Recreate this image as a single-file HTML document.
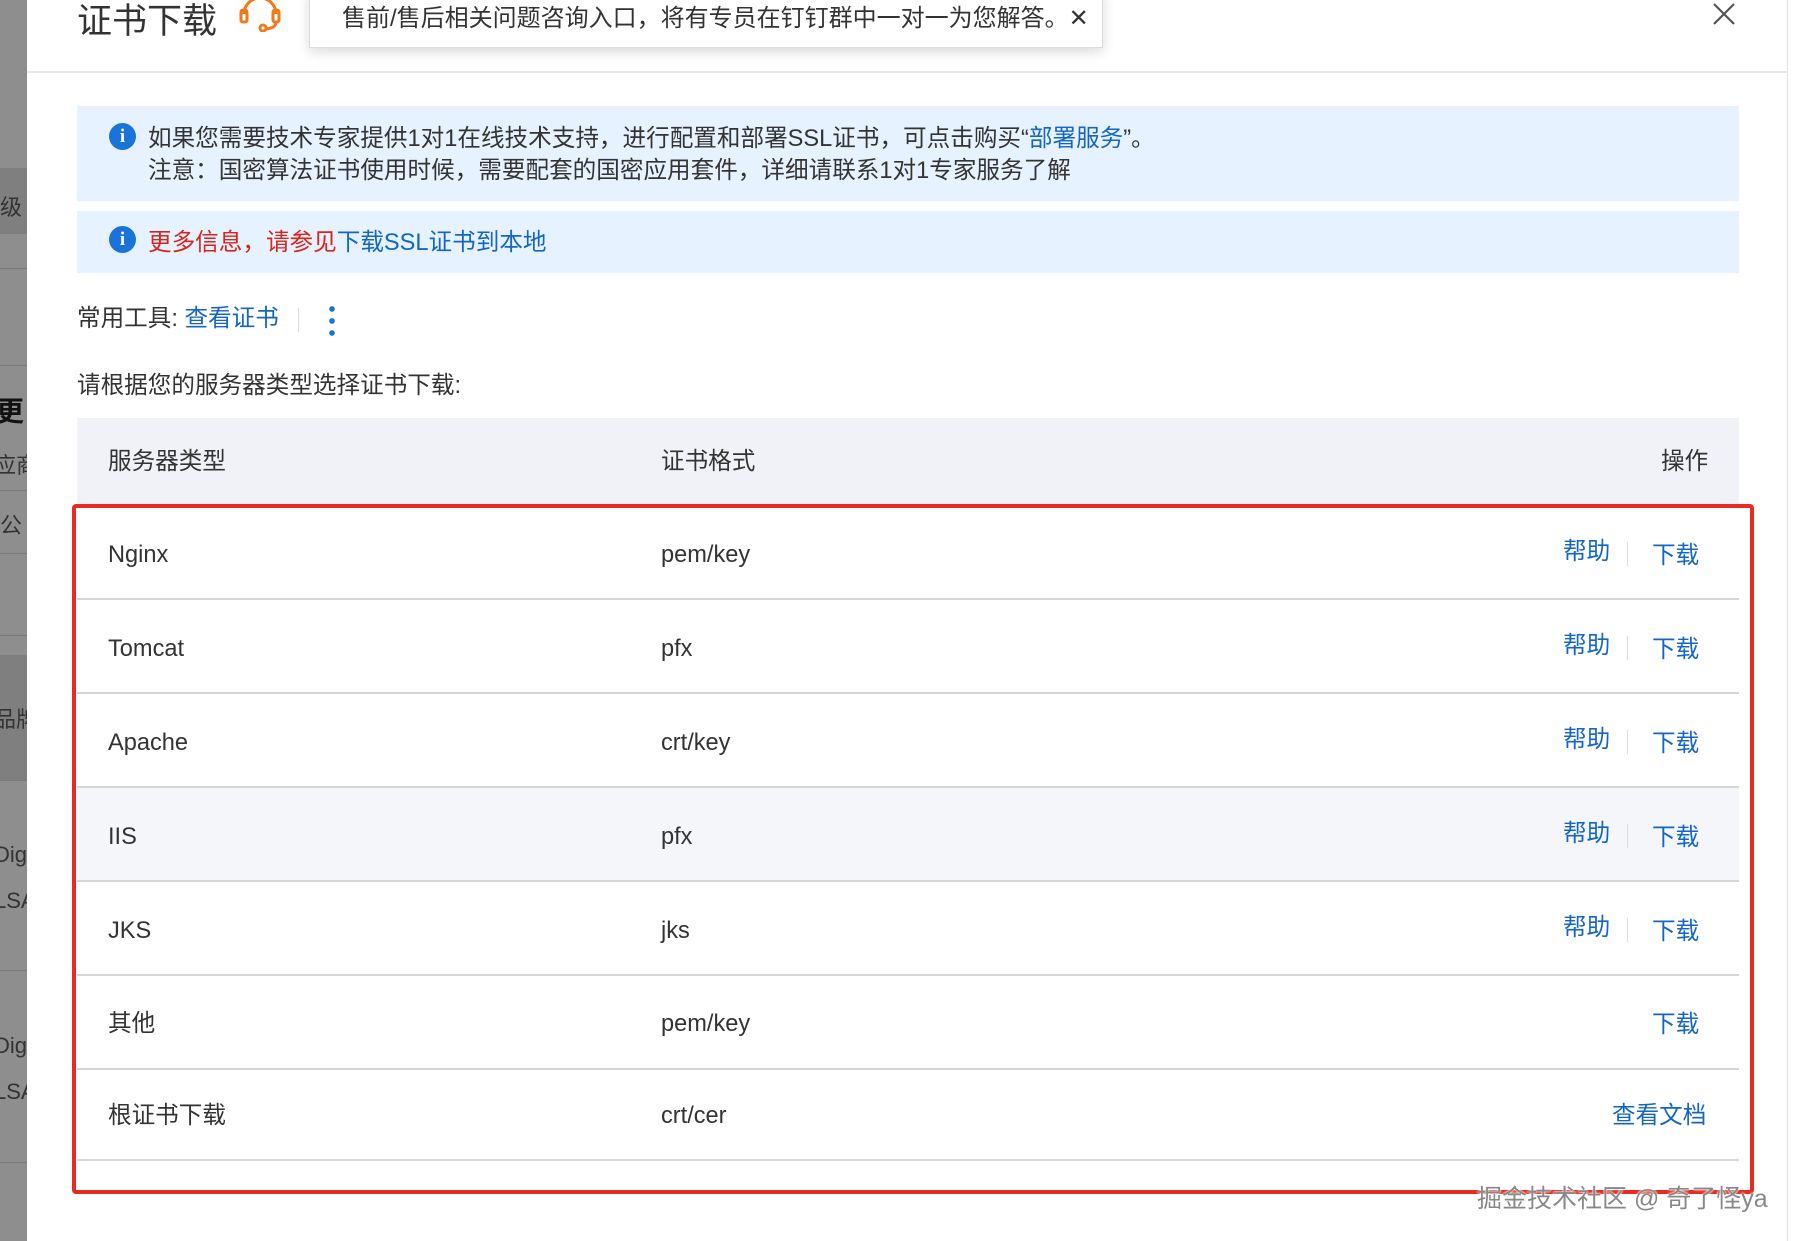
<!DOCTYPE html>
<html><head><meta charset="utf-8"><style>
*{margin:0;padding:0;box-sizing:border-box}
body{width:1795px;height:1241px;overflow:hidden;background:#fff;font-family:"Liberation Sans","Noto Sans CJK SC",sans-serif;color:#333;position:relative}
.abs{position:absolute;white-space:nowrap}
.left{position:absolute;left:0;top:0;width:27px;height:1241px;background:#8e8e8e;overflow:hidden}
.left div{position:absolute;left:0;width:27px;height:1px;background:#7a7a7a}
.rightb{position:absolute;left:1787px;top:0;width:1px;height:1241px;background:#e4e4e4}
.hl{position:absolute;left:27px;top:71px;width:1760px;height:2px;background:#e6e6e6}
.tip{position:absolute;left:309px;top:-10px;width:794px;height:58px;background:#fff;border:1px solid #ddd;box-shadow:0 4px 12px rgba(0,0,0,.15)}
.info{position:absolute;left:77px;width:1662px;background:#e6f2ff}
.icon{position:absolute;width:27px;height:27px;border-radius:50%;background:#1a73d9;color:#fff;font:bold 19px "Liberation Serif",serif;text-align:center;line-height:27px}
.t{font-size:23px;line-height:1}
.t2{font-size:23.6px;line-height:1}
.blue{color:#1466c4}
.thead{position:absolute;left:77px;top:418px;width:1662px;height:86px;background:#f0f2f7}
.row{position:absolute;left:77px;width:1662px;border-bottom:2px solid #d6d6d6}
.red{position:absolute;left:72px;top:504px;width:1682px;height:690px;border:4px solid #ea2a21;border-radius:4px}
.sep{position:absolute;width:1px;height:24px;background:#ddd}
</style></head><body>
<div class="left"><div style="top:168px;height:66px;background:#7f7f7f"></div><div style="top:268px"></div><div style="top:365px"></div><div style="top:490px"></div><div style="top:553px"></div><div style="top:635px"></div><div style="top:655px;height:125px;background:#7f7f7f"></div><div style="top:780px"></div><div style="top:970px"></div><div style="top:1162px"></div>
<span class="abs" style="left:0;top:190px;font-size:22px;color:#333">级</span>
<span class="abs" style="left:-4px;top:390px;font-size:28px;font-weight:bold;color:#111">更</span>
<span class="abs" style="left:-6px;top:448px;font-size:22px;color:#333">应商</span>
<span class="abs" style="left:0;top:508px;font-size:22px;color:#333">公</span>
<span class="abs" style="left:-6px;top:702px;font-size:22px;color:#333">品牌</span>
<span class="abs" style="left:-6px;top:842px;font-size:22px;color:#333">Digi</span>
<span class="abs" style="left:-6px;top:888px;font-size:22px;color:#333">LSA</span>
<span class="abs" style="left:-6px;top:1033px;font-size:22px;color:#333">Digi</span>
<span class="abs" style="left:-6px;top:1079px;font-size:22px;color:#333">LSA</span>
</div>
<div class="rightb"></div>
<div class="hl"></div>
<span class="abs" style="left:77px;top:-7px;font-size:35px;color:#333">证书下载</span>
<svg class="abs" style="left:238px;top:0" width="44" height="32" viewBox="0 0 44 32"><path d="M6 14a16 16 0 0 1 32 0" fill="none" stroke="#f07a1a" stroke-width="3"/><rect x="3" y="10" width="6" height="12" rx="2" fill="none" stroke="#f07a1a" stroke-width="3"/><rect x="35" y="10" width="6" height="12" rx="2" fill="none" stroke="#f07a1a" stroke-width="3"/><path d="M38 22q0 6-10 7" fill="none" stroke="#f07a1a" stroke-width="3"/><circle cx="25" cy="28" r="3" fill="none" stroke="#f07a1a" stroke-width="3"/></svg>
<div class="tip"></div>
<span class="abs" style="left:342px;top:-2px;font-size:24px;color:#333">售前/售后相关问题咨询入口，将有专员在钉钉群中一对一为您解答。✕</span>
<svg class="abs" style="left:1712px;top:2px" width="24" height="24"><path d="M2 2L22 22M22 2L2 22" stroke="#555" stroke-width="2.2"/></svg>

<div class="info" style="top:106px;height:95px"></div>
<div class="icon" style="left:109px;top:123px">i</div>
<span class="abs t2" style="left:148px;top:128px">如果您需要技术专家提供1对1在线技术支持，进行配置和部署SSL证书，可点击购买“<span class="blue">部署服务</span>”。</span>
<span class="abs t2" style="left:148px;top:160px">注意：国密算法证书使用时候，需要配套的国密应用套件，详细请联系1对1专家服务了解</span>
<div class="info" style="top:211px;height:62px"></div>
<div class="icon" style="left:109px;top:226px">i</div>
<span class="abs t2" style="left:148px;top:232px;color:#d9241c">更多信息，请参见<span class="blue">下载SSL证书到本地</span></span>

<span class="abs t2" style="left:77px;top:308px">常用工具: <span class="blue">查看证书</span></span>
<div class="sep" style="left:298px;top:308px"></div>
<div class="abs" style="left:329px;top:303px;width:6px;height:36px;background:radial-gradient(circle,#1a73d9 2.6px,transparent 3px) 0 0/6px 12px"></div>
<span class="abs t2" style="left:77px;top:375px">请根据您的服务器类型选择证书下载:</span>

<div class="thead"></div>
<span class="abs t2" style="left:108px;top:451px">服务器类型</span>
<span class="abs t2" style="left:661px;top:451px">证书格式</span>
<span class="abs t2" style="left:1661px;top:451px">操作</span>

<div class="row" style="top:504px;height:96px"></div>
<div class="row" style="top:600px;height:94px"></div>
<div class="row" style="top:694px;height:94px"></div>
<div class="row" style="top:788px;height:94px;background:#f5f6fa"></div>
<div class="row" style="top:882px;height:94px"></div>
<div class="row" style="top:976px;height:94px"></div>
<div class="row" style="top:1070px;height:91px"></div>

<span class="abs t2" style="left:108px;top:544px">Nginx</span><span class="abs t2" style="left:661px;top:544px">pem/key</span>
<span class="abs t2" style="left:108px;top:638px">Tomcat</span><span class="abs t2" style="left:661px;top:638px">pfx</span>
<span class="abs t2" style="left:108px;top:732px">Apache</span><span class="abs t2" style="left:661px;top:732px">crt/key</span>
<span class="abs t2" style="left:108px;top:826px">IIS</span><span class="abs t2" style="left:661px;top:826px">pfx</span>
<span class="abs t2" style="left:108px;top:920px">JKS</span><span class="abs t2" style="left:661px;top:920px">jks</span>
<span class="abs t2" style="left:108px;top:1013px">其他</span><span class="abs t2" style="left:661px;top:1013px">pem/key</span>
<span class="abs t2" style="left:108px;top:1105px">根证书下载</span><span class="abs t2" style="left:661px;top:1105px">crt/cer</span>

<span class="abs t2 blue" style="left:1563px;top:541px">帮助</span><div class="sep" style="left:1627px;top:542px"></div><span class="abs t2 blue" style="left:1652px;top:545px">下载</span>
<span class="abs t2 blue" style="left:1563px;top:635px">帮助</span><div class="sep" style="left:1627px;top:636px"></div><span class="abs t2 blue" style="left:1652px;top:639px">下载</span>
<span class="abs t2 blue" style="left:1563px;top:729px">帮助</span><div class="sep" style="left:1627px;top:730px"></div><span class="abs t2 blue" style="left:1652px;top:733px">下载</span>
<span class="abs t2 blue" style="left:1563px;top:823px">帮助</span><div class="sep" style="left:1627px;top:824px"></div><span class="abs t2 blue" style="left:1652px;top:827px">下载</span>
<span class="abs t2 blue" style="left:1563px;top:917px">帮助</span><div class="sep" style="left:1627px;top:918px"></div><span class="abs t2 blue" style="left:1652px;top:921px">下载</span>
<span class="abs t2 blue" style="left:1652px;top:1014px">下载</span>
<span class="abs t2 blue" style="left:1612px;top:1105px">查看文档</span>

<div class="red"></div>
<span class="abs" style="left:1477px;top:1179px;font-size:25px;color:#888;text-shadow:0 0 2px #fff,0 0 2px #fff">掘金技术社区 @ 奇了怪ya</span>
</body></html>
